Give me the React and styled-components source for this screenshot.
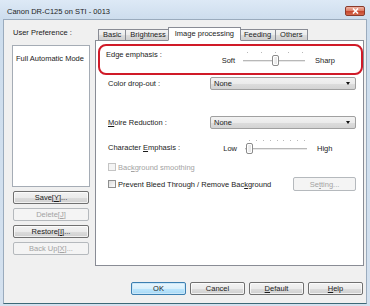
import React from 'react';
import styled, { createGlobalStyle, css } from 'styled-components';

const Global = createGlobalStyle`
  html, body { margin: 0; padding: 0; background: #fff; }
  body { font-family: "Liberation Sans", Arial, sans-serif; font-size: 7.5px; color: #1b1b1b; }
  * { box-sizing: border-box; }
`;

const Window = styled.div`
  width: 370px;
  height: 306px;
  display: flex;
  flex-direction: column;
  background: linear-gradient(#dde9f6, #cddded 19px, #d4e1ef);
  overflow: hidden;
`;

const TitleBar = styled.div`
  height: 19px;
  flex: none;
  display: flex;
  align-items: center;
  justify-content: space-between;
  padding: 4px 5px 0 7px;
`;

const Title = styled.span`
  font-size: 7.5px;
  color: #1e1e1e;
`;

const CloseButton = styled.div`
  width: 20px;
  height: 10px;
  border: 1px solid #8a3b2c;
  border-radius: 2px;
  background: linear-gradient(#eeb4a6, #dc7b63 50%, #c5432b 51%, #d66c4f);
  display: flex;
  align-items: center;
  justify-content: center;
  margin-top: -1px;
`;

const Body = styled.div`
  flex: 1;
  margin: 0 3px 2px 3px;
  background: #f0f0f0;
  border: 1px solid #9aabbd;
  border-bottom-color: #3c6977;
  display: flex;
  flex-direction: column;
`;

const Main = styled.div`
  flex: none;
  height: 247px;
  display: flex;
  padding-top: 8px;
`;

const LeftColumn = styled.div`
  width: 91px;
  flex: none;
  padding: 0 5px 0 8px;
  display: flex;
  flex-direction: column;
`;

const Caption = styled.div`
  line-height: 10px;
  padding-left: 1px;
`;

const ListBox = styled.div`
  margin-top: 7px;
  height: 142px;
  background: #fff;
  border: 1px solid #a5acb5;
  padding: 8px 3px 0 3px;
  line-height: 10px;
`;

const SideButtons = styled.div`
  display: flex;
  flex-direction: column;
  gap: 4px;
  margin-top: 4px;
  padding: 0 1px;
`;

const Button = styled.div`
  height: ${p => p.$h || 13}px;
  width: ${p => (p.$w ? p.$w + 'px' : 'auto')};
  display: flex;
  align-items: center;
  justify-content: center;
  border: 1px solid #707070;
  border-radius: 2px;
  background: linear-gradient(#f2f2f2, #ebebeb 50%, #dddddd 51%, #cfcfcf);
  box-shadow: inset 0 0 0 1px rgba(255,255,255,0.7);
  color: #1b1b1b;
  ${p => p.$disabled && css`
    border-color: #b5b9bd;
    background: #f4f4f4;
    box-shadow: none;
    color: #a3a3a3;
  `}
  ${p => p.$default && css`
    border-color: #3c7fb1;
    background: linear-gradient(#eaf6fd, #d9f0fc 50%, #bee6fd 51%, #a7d9f5);
    box-shadow: inset 0 0 0 1px #cbe7f8;
  `}
`;

const U = styled.span`
  text-decoration: underline;
  text-underline-offset: 1px;
`;

const RightColumn = styled.div`
  width: 269px;
  flex: none;
  display: flex;
  flex-direction: column;
`;

const TabStrip = styled.div`
  height: 13px;
  display: flex;
  align-items: flex-end;
  padding-left: 3px;
  position: relative;
  z-index: 1;
  margin-bottom: -1px;
`;

const Tab = styled.div`
  height: 12px;
  padding: 0 4px;
  display: flex;
  align-items: center;
  border: 1px solid #898c95;
  border-right: none;
  background: linear-gradient(#f3f3f3, #ebebeb 50%, #dddddd 51%, #cfcfcf);
  line-height: 10px;
  &:last-child { border-right: 1px solid #898c95; }
  ${p => p.$active && css`
    height: 14px;
    margin: 0 -2px;
    padding: 0 6px 1px;
    background: #fff;
    border-right: 1px solid #898c95;
    border-bottom-color: #fff;
    position: relative;
    z-index: 2;
  `}
`;

const Panel = styled.div`
  height: 226px;
  background: #fff;
  border: 1px solid #898c95;
  display: flex;
  flex-direction: column;
  padding: 3px 0 0 2px;
`;

const Highlight = styled.div`
  height: 31px;
  border: 2px solid #d01a28;
  border-radius: 8px;
  padding: 0 18px 0 6px;
`;

const Fields = styled.div`
  display: flex;
  flex-direction: column;
  padding: 0 7px 0 10px;
`;

const FieldRow = styled.div`
  display: grid;
  grid-template-columns: ${p => p.$label}px 1fr;
  align-items: ${p => (p.$top ? 'start' : 'center')};
  height: ${p => p.$h}px;
  margin-top: ${p => p.$mt || 0}px;
`;

const FieldLabel = styled.div`
  line-height: 10px;
  padding-top: ${p => p.$pt || 0}px;
`;

const Select = styled.div`
  height: 13px;
  border: 1px solid #a0a0a0;
  border-radius: 2px;
  background: linear-gradient(#f2f2f2, #ebebeb 50%, #dddddd 51%, #d3d3d3);
  display: flex;
  align-items: center;
  justify-content: space-between;
  padding: 0 5px 0 3px;
`;

const Arrow = styled.span`
  width: 0;
  height: 0;
  border-left: 2.5px solid transparent;
  border-right: 2.5px solid transparent;
  border-top: 3px solid #111;
`;

const SliderGroup = styled.div`
  display: grid;
  grid-template-columns: 20px 62px auto;
  column-gap: 0;
  align-items: center;
  margin-top: ${p => p.$mt || 0}px;
`;

const SliderMin = styled.span`
  text-align: right;
  padding-right: 8px;
  width: 28px;
  margin-left: -8px;
`;

const SliderMax = styled.span`
  padding-left: 10px;
`;

const SliderTrack = styled.div`
  position: relative;
  height: 16px;
  width: 62px;
  &::before {
    content: '';
    position: absolute;
    left: 0;
    right: 0;
    top: 8px;
    height: 1px;
    background: #b8b8b8;
    box-shadow: 0 1px 0 #e8e8e8;
  }
`;

const Tick = styled.span`
  position: absolute;
  top: 0;
  width: 1px;
  height: 1px;
  background: #b9b9b9;
`;

const Thumb = styled.span`
  position: absolute;
  top: 3px;
  width: 7px;
  height: 11px;
  border: 1px solid #8b8b8b;
  border-radius: 2px;
  background: linear-gradient(90deg, #f6f6f6, #e2e2e2);
  box-shadow: inset 0 0 0 1px #fff;
`;

const CheckRow = styled.div`
  display: flex;
  align-items: center;
  height: ${p => p.$h}px;
  margin-top: ${p => p.$mt || 0}px;
  color: ${p => (p.$disabled ? '#a3a3a3' : '#1b1b1b')};
`;

const Box = styled.span`
  width: 8px;
  height: 8px;
  margin-right: 2px;
  border: 1px solid ${p => (p.$disabled ? '#c4c4c4' : '#8e8f8f')};
  background: ${p => (p.$disabled ? '#f4f4f4' : 'linear-gradient(135deg, #dcdcdc, #fdfdfd)')};
`;

const Spacer = styled.span`
  flex: 1;
`;

const Footer = styled.div`
  flex: 1;
  display: flex;
  justify-content: flex-end;
  gap: 4px;
  padding: 15px 3px 0 0;
`;

function Slider({ ticks, value }) {
  const step = 55 / (ticks - 1);
  return (
    <SliderTrack>
      {Array.from({ length: ticks }).map((_, i) => (
        <Tick key={i} style={{ left: Math.round(4 + i * step) }} />
      ))}
      <Thumb style={{ left: Math.round(4 + value * step) - 3 }} />
    </SliderTrack>
  );
}

function SliderControl({ min, max, ticks, value, mt }) {
  return (
    <SliderGroup $mt={mt}>
      <SliderMin>{min}</SliderMin>
      <Slider ticks={ticks} value={value} />
      <SliderMax>{max}</SliderMax>
    </SliderGroup>
  );
}

export default function App() {
  return (
    <>
      <Global />
      <Window>
        <TitleBar>
          <Title>Canon DR-C125 on STI - 0013</Title>
          <CloseButton>
            <svg width="7" height="6" viewBox="0 0 7 6">
              <path d="M1 0.5 L6 5.5 M6 0.5 L1 5.5" stroke="#fff" strokeWidth="1.6" />
            </svg>
          </CloseButton>
        </TitleBar>
        <Body>
          <Main>
            <LeftColumn>
              <Caption>User Preference :</Caption>
              <ListBox>Full Automatic Mode</ListBox>
              <SideButtons>
                <Button>Save[<U>Y</U>]...</Button>
                <Button $disabled>Delete[<U>J</U>]</Button>
                <Button>Restore[<U>I</U>]...</Button>
                <Button $disabled>Back Up[<U>X</U>]...</Button>
              </SideButtons>
            </LeftColumn>
            <RightColumn>
              <TabStrip>
                <Tab>Basic</Tab>
                <Tab>Brightness</Tab>
                <Tab $active>Image processing</Tab>
                <Tab>Feeding</Tab>
                <Tab>Others</Tab>
              </TabStrip>
              <Panel>
                <Highlight>
                  <FieldRow $label={117} $h={27} $top>
                    <FieldLabel $pt={4}>Edge emphasis :</FieldLabel>
                    <SliderControl min="Soft" max="Sharp" ticks={5} value={2} mt={6} />
                  </FieldRow>
                </Highlight>
                <Fields>
                  <FieldRow $label={102} $h={13} $mt={2}>
                    <FieldLabel>Color drop-out :</FieldLabel>
                    <Select>None<Arrow /></Select>
                  </FieldRow>
                  <FieldRow $label={102} $h={13} $mt={26}>
                    <FieldLabel><U>M</U>oire Reduction :</FieldLabel>
                    <Select>None<Arrow /></Select>
                  </FieldRow>
                  <FieldRow $label={117} $h={16} $mt={11}>
                    <FieldLabel>Character <U>E</U>mphasis :</FieldLabel>
                    <SliderControl min="Low" max="High" ticks={9} value={0} />
                  </FieldRow>
                  <CheckRow $h={12} $mt={5} $disabled>
                    <Box $disabled />Bac<U>k</U>ground smoothing
                  </CheckRow>
                  <CheckRow $h={14} $mt={4}>
                    <Box />Prevent Bleed Through / Remove Bac<U>k</U>ground
                    <Spacer />
                    <Button $disabled $w={63} $h={14}>Se<U>t</U>ting...</Button>
                  </CheckRow>
                </Fields>
              </Panel>
            </RightColumn>
          </Main>
          <Footer>
            <Button $default $w={55}>OK</Button>
            <Button $w={55}>Cancel</Button>
            <Button $w={55}><U>D</U>efault</Button>
            <Button $w={55}><U>H</U>elp</Button>
          </Footer>
        </Body>
      </Window>
    </>
  );
}
